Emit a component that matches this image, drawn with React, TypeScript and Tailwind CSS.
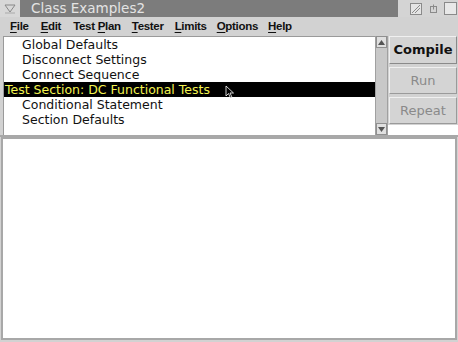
import React from "react";

const font = { fontFamily: '"DejaVu Sans", "Liberation Sans", sans-serif' };
const menuFont = { fontFamily: '"Liberation Sans", Arial, sans-serif' };

function U({ children }: { children: React.ReactNode }) {
  return <span className="underline underline-offset-2">{children}</span>;
}

export default function App() {
  const items = [
    { t: "Global Defaults", sel: false },
    { t: "Disconnect Settings", sel: false },
    { t: "Connect Sequence", sel: false },
    { t: "Test Section: DC Functional Tests", sel: true },
    { t: "Conditional Statement", sel: false },
    { t: "Section Defaults", sel: false },
  ];
  return (
    <div className="w-[458px] h-[342px] bg-[#d2d2d2] flex flex-col overflow-hidden text-[12.5px]" style={font}>
      {/* title bar */}
      <div className="h-[17px] flex">
        <div className="w-[20px] bg-[#d8d8d8] flex items-center justify-center">
          <svg width="12" height="10" viewBox="0 0 12 10">
            <path d="M1 1 L11 1 L6 8 Z" fill="none" stroke="#888" strokeWidth="1" />
            <path d="M1 9 L11 9" stroke="#aaa" />
          </svg>
        </div>
        <div className="flex-1 bg-[#7c7c7c] text-[#e4e4e4] pl-[11px] leading-[17px] text-[13.5px]">Class Examples2</div>
        <div className="w-[60px] bg-[#d4d4d4] flex items-center gap-[6px] pl-[12px]">
          <svg width="12" height="12" viewBox="0 0 12 12">
            <rect x="0.5" y="0.5" width="11" height="11" fill="#e4e4e4" stroke="#8a8a8a" />
            <path d="M2 10 L10 2 M5 10 L10 5" stroke="#8a8a8a" />
          </svg>
          <svg width="10" height="10" viewBox="0 0 10 10">
            <rect x="2.5" y="2.5" width="6" height="6" fill="none" stroke="#8a8a8a" />
            <path d="M5.5 0.5 L5.5 5.5" stroke="#8a8a8a" />
          </svg>
          <svg width="13" height="13" viewBox="0 0 13 13">
            <rect x="0.5" y="0.5" width="12" height="12" fill="#e8e8e8" stroke="#8a8a8a" />
          </svg>
        </div>
      </div>
      {/* menu bar */}
      <div className="h-[19px] flex items-center font-bold text-[#111] text-[11.5px] tracking-[-0.3px]" style={menuFont}>
        <span className="ml-[10px]"><U>F</U>ile</span>
        <span className="ml-[12px]"><U>E</U>dit</span>
        <span className="ml-[12px]">Test <U>P</U>lan</span>
        <span className="ml-[11px]"><U>T</U>ester</span>
        <span className="ml-[11px]"><U>L</U>imits</span>
        <span className="ml-[10px]"><U>O</U>ptions</span>
        <span className="ml-[10px]"><U>H</U>elp</span>
      </div>
      {/* top panel */}
      <div className="h-[101px] flex border-b-2 border-[#a8a8a8]">
        <div className="w-[372px] ml-[3px] bg-white border-t border-l border-[#9a9a9a]">
          {items.map((it) =>
            it.sel ? (
              <div key={it.t} className="h-[15px] leading-[15px] bg-black text-[#f4f450] pl-[1px] relative">
                {it.t}
                <svg className="absolute left-[221px] top-[3px]" width="10" height="14" viewBox="0 0 10 14">
                  <path d="M1 1 L1 11 L3.5 8.5 L5.5 13 L7 12.3 L5 8 L8.5 8 Z" fill="#000" stroke="#fff" strokeWidth="0.8" />
                </svg>
              </div>
            ) : (
              <div key={it.t} className="h-[15px] leading-[15px] text-[#111] pl-[18px]">{it.t}</div>
            )
          )}
        </div>
        <div className="w-[13px] bg-[#c8c8c8] border-x border-[#a0a0a0] flex flex-col justify-between">
          <div className="h-[12px] bg-[#e0e0e0] border border-[#909090] flex items-center justify-center">
            <svg width="7" height="5" viewBox="0 0 7 5"><path d="M0 5 L3.5 0 L7 5 Z" fill="#555" /></svg>
          </div>
          <div className="h-[12px] bg-[#e0e0e0] border border-[#909090] flex items-center justify-center">
            <svg width="7" height="5" viewBox="0 0 7 5"><path d="M0 0 L3.5 5 L7 0 Z" fill="#555" /></svg>
          </div>
        </div>
        <div className="flex-1 flex flex-col">
          <div className="bg-[#d2d2d2] flex flex-col gap-[3px] pl-[1px] pr-[1px] pb-[1px]">
            <div className="h-[28px] border border-t-[#f0f0f0] border-l-[#f0f0f0] border-r-[#8a8a8a] border-b-[#8a8a8a] bg-[#d4d4d4] flex items-center justify-center font-bold text-[13px] text-[#111]">Compile</div>
            <div className="h-[27px] border border-t-[#f0f0f0] border-l-[#f0f0f0] border-r-[#9a9a9a] border-b-[#9a9a9a] bg-[#d4d4d4] flex items-center justify-center text-[13px] text-[#8a8a8a]">Run</div>
            <div className="h-[27px] border border-t-[#f0f0f0] border-l-[#f0f0f0] border-r-[#9a9a9a] border-b-[#9a9a9a] bg-[#d4d4d4] flex items-center justify-center text-[13px] text-[#8a8a8a]">Repeat</div>
          </div>
          <div className="flex-1 bg-white" />
        </div>
      </div>
      {/* bottom panel */}
      <div className="flex-1 mx-[1px] mb-[2px] border-2 border-[#a8a8a8] bg-white" />
    </div>
  );
}
